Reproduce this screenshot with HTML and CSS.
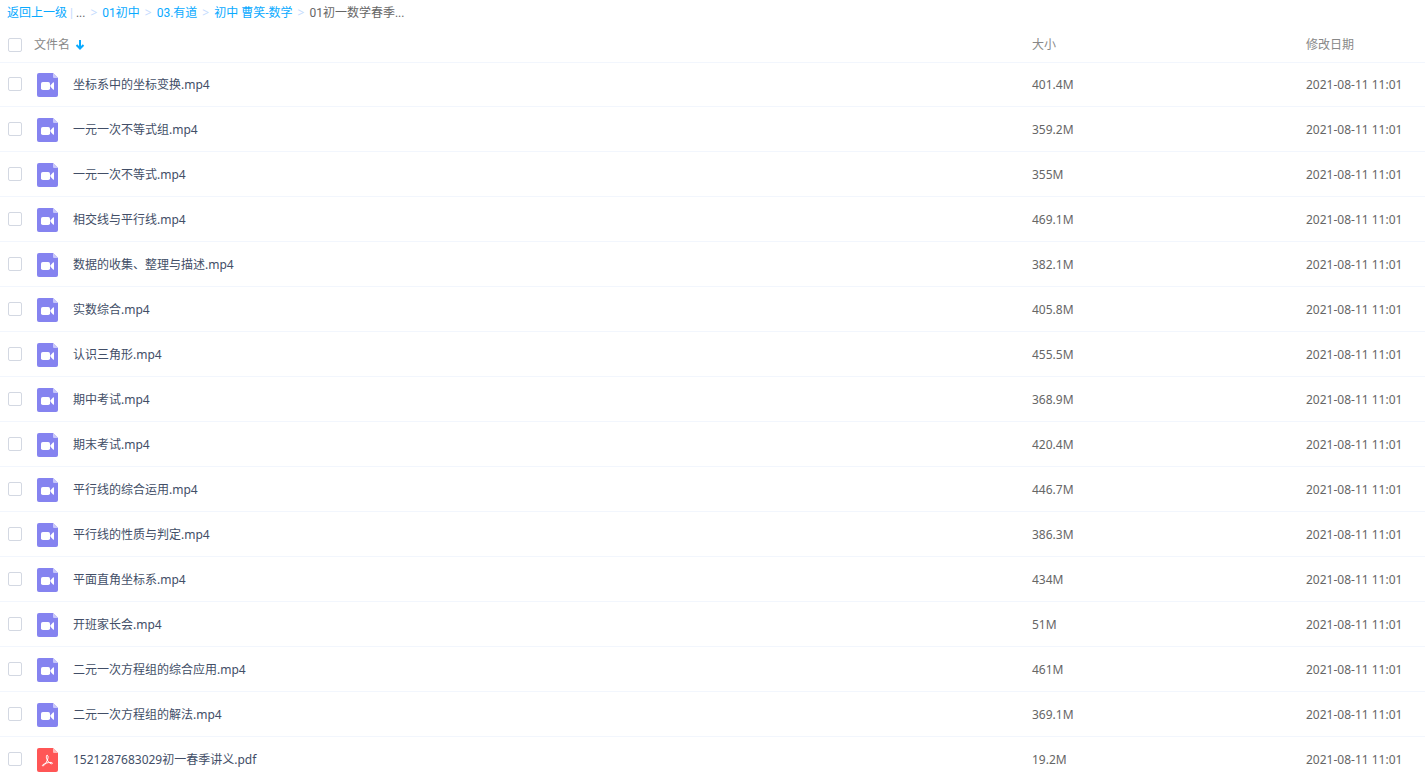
FILE: index.html
```html
<!DOCTYPE html>
<html lang="zh-CN">
<head>
  <meta charset="UTF-8">
  <title>01初一数学春季</title>
  <link rel="stylesheet" href="styles.css">
</head>
<body>

  <!-- ICONS -->
  <svg class="sprite" aria-hidden="true">
    <symbol id="icon-video" viewBox="0 0 21 24">
      <path fill="#8583f0" d="M2 0h14l5 5v17a2 2 0 0 1-2 2H2a2 2 0 0 1-2-2V2a2 2 0 0 1 2-2z"/>
      <path fill="#c9c8fa" d="M16 0l5 5h-4a1 1 0 0 1-1-1z"/>
      <rect fill="#fff" x="4" y="9" width="9" height="8" rx="1.800"/>
      <path fill="#fff" d="M13.500 12.300L16 9.500q1-.8 1 .4v6.200q0 1.200-1 .4l-2.500-2.800z"/>
    </symbol>
    <symbol id="icon-pdf" viewBox="0 0 21 24">
      <path fill="#ff5656" d="M2 0h14l5 5v17a2 2 0 0 1-2 2H2a2 2 0 0 1-2-2V2a2 2 0 0 1 2-2z"/>
      <path fill="#ffbcbc" d="M16 0l5 5h-4a1 1 0 0 1-1-1z"/>
      <path fill="none" stroke="#fff" stroke-linecap="round" stroke-linejoin="round" d="M10 7.500c1.300-.3 1.300 1.400.8 3.300-.8 3-3 6-4.300 7-.9.600-1.500-.2-.8-.9 1.500-1.300 5.300-2.600 8.300-2.500 2 .1 1.800 1.500.6 1.400-2-.2-4.500-3.200-5.100-5.700-.3-1.200-.2-2.400.5-2.600z"/>
    </symbol>
  </svg>

  <div class="page">

    <!-- BREADCRUMB -->
    <nav class="crumbs">
      <a href="#">返回上一级</a>
      <span class="bar">|</span>
      <span>...</span>
      <span class="sep">&gt;</span>
      <a href="#">01初中</a>
      <span class="sep">&gt;</span>
      <a href="#">03.有道</a>
      <span class="sep">&gt;</span>
      <a href="#">初中 曹笑-数学</a>
      <span class="sep">&gt;</span>
      <span>01初一数学春季...</span>
    </nav>

    <!-- FILE LIST -->
    <table class="files">
      <thead>
        <tr>
          <th class="name">
            <div class="cell">
              <input type="checkbox" aria-label="全选">
              <span class="title">文件名</span>
              <svg class="arrow" viewBox="0 0 10 10" aria-hidden="true"><path d="M5 0v8M1.500 5L5 8.500 8.500 5"/></svg>
            </div>
          </th>
          <th class="size">大小</th>
          <th class="date">修改日期</th>
        </tr>
      </thead>
      <tbody>
        <tr>
          <td><div class="cell"><input type="checkbox" aria-labelledby="f1"><svg class="icon"><use href="#icon-video"/></svg><a href="#" id="f1">坐标系中的坐标变换.mp4</a></div></td>
          <td>401.4M</td>
          <td>2021-08-11 11:01</td>
        </tr>
        <tr>
          <td><div class="cell"><input type="checkbox" aria-labelledby="f2"><svg class="icon"><use href="#icon-video"/></svg><a href="#" id="f2">一元一次不等式组.mp4</a></div></td>
          <td>359.2M</td>
          <td>2021-08-11 11:01</td>
        </tr>
        <tr>
          <td><div class="cell"><input type="checkbox" aria-labelledby="f3"><svg class="icon"><use href="#icon-video"/></svg><a href="#" id="f3">一元一次不等式.mp4</a></div></td>
          <td>355M</td>
          <td>2021-08-11 11:01</td>
        </tr>
        <tr>
          <td><div class="cell"><input type="checkbox" aria-labelledby="f4"><svg class="icon"><use href="#icon-video"/></svg><a href="#" id="f4">相交线与平行线.mp4</a></div></td>
          <td>469.1M</td>
          <td>2021-08-11 11:01</td>
        </tr>
        <tr>
          <td><div class="cell"><input type="checkbox" aria-labelledby="f5"><svg class="icon"><use href="#icon-video"/></svg><a href="#" id="f5">数据的收集、整理与描述.mp4</a></div></td>
          <td>382.1M</td>
          <td>2021-08-11 11:01</td>
        </tr>
        <tr>
          <td><div class="cell"><input type="checkbox" aria-labelledby="f6"><svg class="icon"><use href="#icon-video"/></svg><a href="#" id="f6">实数综合.mp4</a></div></td>
          <td>405.8M</td>
          <td>2021-08-11 11:01</td>
        </tr>
        <tr>
          <td><div class="cell"><input type="checkbox" aria-labelledby="f7"><svg class="icon"><use href="#icon-video"/></svg><a href="#" id="f7">认识三角形.mp4</a></div></td>
          <td>455.5M</td>
          <td>2021-08-11 11:01</td>
        </tr>
        <tr>
          <td><div class="cell"><input type="checkbox" aria-labelledby="f8"><svg class="icon"><use href="#icon-video"/></svg><a href="#" id="f8">期中考试.mp4</a></div></td>
          <td>368.9M</td>
          <td>2021-08-11 11:01</td>
        </tr>
        <tr>
          <td><div class="cell"><input type="checkbox" aria-labelledby="f9"><svg class="icon"><use href="#icon-video"/></svg><a href="#" id="f9">期末考试.mp4</a></div></td>
          <td>420.4M</td>
          <td>2021-08-11 11:01</td>
        </tr>
        <tr>
          <td><div class="cell"><input type="checkbox" aria-labelledby="f10"><svg class="icon"><use href="#icon-video"/></svg><a href="#" id="f10">平行线的综合运用.mp4</a></div></td>
          <td>446.7M</td>
          <td>2021-08-11 11:01</td>
        </tr>
        <tr>
          <td><div class="cell"><input type="checkbox" aria-labelledby="f11"><svg class="icon"><use href="#icon-video"/></svg><a href="#" id="f11">平行线的性质与判定.mp4</a></div></td>
          <td>386.3M</td>
          <td>2021-08-11 11:01</td>
        </tr>
        <tr>
          <td><div class="cell"><input type="checkbox" aria-labelledby="f12"><svg class="icon"><use href="#icon-video"/></svg><a href="#" id="f12">平面直角坐标系.mp4</a></div></td>
          <td>434M</td>
          <td>2021-08-11 11:01</td>
        </tr>
        <tr>
          <td><div class="cell"><input type="checkbox" aria-labelledby="f13"><svg class="icon"><use href="#icon-video"/></svg><a href="#" id="f13">开班家长会.mp4</a></div></td>
          <td>51M</td>
          <td>2021-08-11 11:01</td>
        </tr>
        <tr>
          <td><div class="cell"><input type="checkbox" aria-labelledby="f14"><svg class="icon"><use href="#icon-video"/></svg><a href="#" id="f14">二元一次方程组的综合应用.mp4</a></div></td>
          <td>461M</td>
          <td>2021-08-11 11:01</td>
        </tr>
        <tr>
          <td><div class="cell"><input type="checkbox" aria-labelledby="f15"><svg class="icon"><use href="#icon-video"/></svg><a href="#" id="f15">二元一次方程组的解法.mp4</a></div></td>
          <td>369.1M</td>
          <td>2021-08-11 11:01</td>
        </tr>
        <tr>
          <td><div class="cell"><input type="checkbox" aria-labelledby="f16"><svg class="icon"><use href="#icon-pdf"/></svg><a href="#" id="f16">1521287683029初一春季讲义.pdf</a></div></td>
          <td>19.2M</td>
          <td>2021-08-11 11:01</td>
        </tr>
      </tbody>
    </table>
  </div>

</body>
</html>
```
FILE: styles.css
```css
* {
  box-sizing: border-box;
}

body {
  margin: 0;
  background: #fff;
  color: #666;
  font-family: "Noto Sans", "Noto Sans CJK SC", sans-serif;
  font-size: 12px;
  line-height: 16px;
}

a {
  color: #09aaff;
  text-decoration: none;
}

.sprite {
  display: none;
}

.page {
  height: 100vh;
  overflow-y: auto;
  scrollbar-width: none;
}

/* breadcrumb */
.crumbs {
  display: flex;
  align-items: center;
  gap: 5px;
  height: 26px;
  padding-left: 7px;
  font-family: Roboto, "Noto Sans CJK SC", sans-serif;
  white-space: nowrap;
}

.crumbs .sep,
.crumbs .bar {
  color: #c4dbfe;
}

.crumbs .sep {
  font-family: "Noto Sans", sans-serif;
}

.crumbs .bar {
  margin: 0 -2px;
}

/* file list */
.files {
  width: 100%;
  table-layout: fixed;
  border-collapse: separate;
  border-spacing: 0;
}

.files th,
.files td {
  height: 45px;
  padding: 2px 0 0;
  border-bottom: 1px solid #f2f6fd;
  text-align: left;
  vertical-align: middle;
}

.files th {
  height: 37px;
  color: #888;
  font-weight: normal;
}

.files tbody tr:first-child td {
  height: 44px;
  padding-top: 0;
}

.files .size {
  width: 274px;
}

.files .date {
  width: 119px;
}

.cell {
  display: flex;
  align-items: center;
  padding-left: 8px;
}

.cell a {
  color: #424e67;
}

.cell .title {
  margin-left: 12px;
}

input[type="checkbox"] {
  appearance: none;
  width: 14px;
  height: 14px;
  margin: 0;
  border: 1px solid #d3d8e2;
  border-radius: 2px;
  background: #fff;
}

tbody input[type="checkbox"] {
  margin-bottom: 2px;
}

input[type="checkbox"]:checked {
  background: #09aaff;
}

.icon {
  width: 21px;
  height: 24px;
  margin: 0 15px;
}

.arrow {
  width: 10px;
  height: 10px;
  margin-left: 5px;
  fill: none;
  stroke: #09aaff;
  stroke-width: 2;
}
```
